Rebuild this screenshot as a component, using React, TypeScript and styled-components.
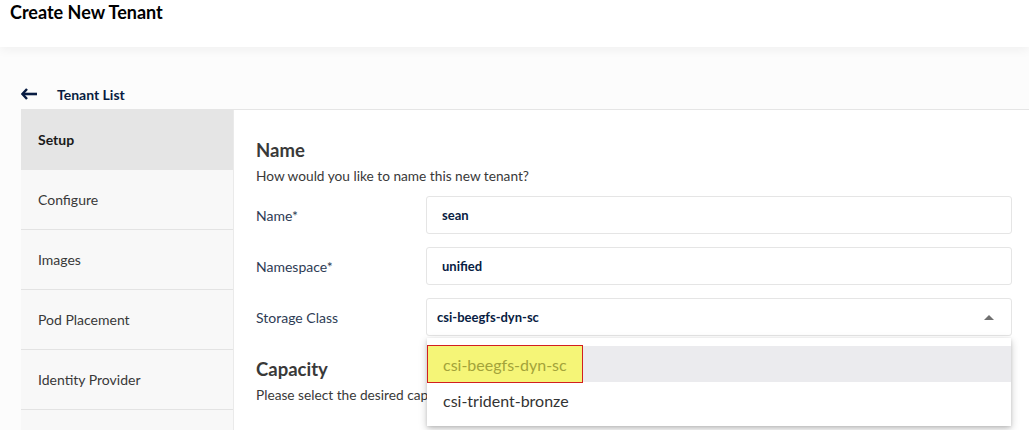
import React from "react";
import styled, { createGlobalStyle } from "styled-components";

const Global = createGlobalStyle`
  html, body { margin: 0; padding: 0; }
  body {
    font-family: Lato, "Noto Sans", sans-serif;
    background: #fcfcfc;
    overflow: hidden;
  }
  * { box-sizing: border-box; }
`;

const Header = styled.header`
  height: 47px;
  background: #ffffff;
  padding: 2px 10px 0;
  box-shadow: 0 3px 10px rgba(0, 0, 0, 0.05);
  position: relative;
  z-index: 1;
`;

const Title = styled.h1`
  margin: 0;
  font-size: 18px;
  line-height: 20px;
  font-weight: 700;
  color: #000000;
`;

const Body = styled.div`
  padding: 40px 0 0 21px;
`;

const BackRow = styled.div`
  display: flex;
  align-items: center;
  height: 14px;
  gap: 20px;
  margin-bottom: 8px;
`;

const BackText = styled.span`
  font-size: 14px;
  font-weight: 700;
  color: #081c42;
  line-height: 14px;
  position: relative;
  top: 1px;
`;

const Panel = styled.div`
  display: flex;
  border-top: 1px solid #e5e5e5;
  background: #ffffff;
  height: 330px;
`;

const Sidebar = styled.nav`
  width: 213px;
  flex: none;
  background: #f8f8f8;
  border-right: 1px solid #eaeaea;
`;

const NavItem = styled.div<{ $active?: boolean }>`
  height: 60px;
  display: flex;
  align-items: center;
  padding-left: 17px;
  font-size: 14px;
  color: ${(p) => (p.$active ? "#1a1a1a" : "#393939")};
  font-weight: ${(p) => (p.$active ? 700 : 400)};
  background: ${(p) => (p.$active ? "#e5e5e5" : "#f8f8f8")};
  border-bottom: 1px solid ${(p) => (p.$active ? "#e5e5e5" : "#e3e3e3")};
`;

const Content = styled.section`
  flex: 1;
  padding: 29px 17px 0 22px;
  position: relative;
`;

const SectionTitle = styled.h2`
  margin: 0;
  font-size: 18.5px;
  line-height: 22px;
  font-weight: 700;
  color: #393939;
`;

const SectionText = styled.p`
  margin: 6px 0 0;
  font-size: 13.7px;
  line-height: 17px;
  color: #393939;
`;

const Form = styled.div`
  margin-top: 12px;
  display: flex;
  flex-direction: column;
  gap: 13px;
`;

const Row = styled.div`
  display: flex;
  align-items: center;
  position: relative;
`;

const Label = styled.label`
  width: 170px;
  flex: none;
  font-size: 14px;
  color: #2e3c55;
`;

const Field = styled.div<{ $select?: boolean }>`
  flex: 1;
  height: 38px;
  border: 1px solid #e5e5e5;
  border-radius: 3px;
  display: flex;
  align-items: center;
  justify-content: space-between;
  padding: 0 17px 0 ${(p) => (p.$select ? "10px" : "15px")};
  font-size: 13px;
  font-weight: 700;
  color: #081c42;
  background: #ffffff;
`;

const Caret = styled.span`
  width: 0;
  height: 0;
  border-left: 5px solid transparent;
  border-right: 5px solid transparent;
  border-bottom: 5px solid #707070;
`;

const Menu = styled.ul`
  position: absolute;
  top: 40px;
  left: 171px;
  right: 1px;
  margin: 0;
  padding: 8px 0;
  list-style: none;
  background: #ffffff;
  box-shadow: 0 3px 8px rgba(0, 0, 0, 0.22), 0 1px 3px rgba(0, 0, 0, 0.12);
  z-index: 5;
`;

const MenuItem = styled.li<{ $hover?: boolean }>`
  height: 36px;
  display: flex;
  align-items: center;
  padding-left: ${(p) => (p.$hover ? "0" : "16px")};
  font-size: 16px;
  color: #333333;
  background: ${(p) => (p.$hover ? "#ebebee" : "#ffffff")};
`;

const Highlight = styled.span`
  height: 38px;
  margin: -1px 0;
  display: inline-flex;
  align-items: center;
  padding: 0 15px;
  background: #f5f577;
  border: 1px solid #d21f1f;
  color: #a3a33a;
`;

const Spacer = styled.div`
  height: 22px;
`;

const BackArrow = () => (
  <svg width="16" height="12" viewBox="0 0 16 12" aria-hidden="true">
    <path d="M6 1 L1.5 6 L6 11" fill="none" stroke="#081c42" strokeWidth="2.4" strokeLinejoin="miter" />
    <path d="M2 6 H16" stroke="#081c42" strokeWidth="2.6" />
  </svg>
);

export default function App() {
  return (
    <>
      <Global />
      <Header>
        <Title>Create New Tenant</Title>
      </Header>
      <Body>
        <BackRow>
          <BackArrow />
          <BackText>Tenant List</BackText>
        </BackRow>
        <Panel>
          <Sidebar>
            <NavItem $active>Setup</NavItem>
            <NavItem>Configure</NavItem>
            <NavItem>Images</NavItem>
            <NavItem>Pod Placement</NavItem>
            <NavItem>Identity Provider</NavItem>
            <NavItem />
          </Sidebar>
          <Content>
            <SectionTitle>Name</SectionTitle>
            <SectionText>How would you like to name this new tenant?</SectionText>
            <Form>
              <Row>
                <Label>Name*</Label>
                <Field>sean</Field>
              </Row>
              <Row>
                <Label>Namespace*</Label>
                <Field>unified</Field>
              </Row>
              <Row>
                <Label>Storage Class</Label>
                <Field $select>
                  csi-beegfs-dyn-sc
                  <Caret />
                </Field>
                <Menu>
                  <MenuItem $hover>
                    <Highlight>csi-beegfs-dyn-sc</Highlight>
                  </MenuItem>
                  <MenuItem>csi-trident-bronze</MenuItem>
                </Menu>
              </Row>
            </Form>
            <Spacer />
            <SectionTitle>Capacity</SectionTitle>
            <SectionText>Please select the desired capacity</SectionText>
          </Content>
        </Panel>
      </Body>
    </>
  );
}
